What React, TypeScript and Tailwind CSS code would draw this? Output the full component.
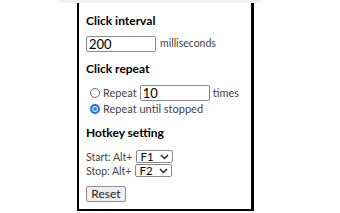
import React from 'react';

function Chevron() {
  return (
    <svg width="9" height="6" viewBox="0 0 9 6" className="ml-auto mr-[3px]">
      <path d="M1 1 L4.5 4.5 L8 1" fill="none" stroke="#222" strokeWidth="1.4" />
    </svg>
  );
}

function FakeSelect({ value }: { value: string }) {
  return (
    <div className="flex items-center w-[37px] h-[13px] border border-[#8a8a8a] rounded-[2px] bg-white pl-[3px] text-[11.5px] leading-[10px] text-black">
      {value}
      <Chevron />
    </div>
  );
}

function Radio({ checked }: { checked?: boolean }) {
  if (checked) {
    return (
      <span className="w-[10px] h-[10px] rounded-full bg-[#1a73e8] flex items-center justify-center shrink-0">
        <span className="w-[6px] h-[6px] rounded-full bg-[#2f86f6] border border-white" />
      </span>
    );
  }
  return <span className="w-[10px] h-[10px] rounded-full border border-[#6b6b6b] bg-white shrink-0" />;
}

export default function App() {
  return (
    <div
      className="w-[340px] h-[213px] bg-white overflow-hidden relative"
      style={{ fontFamily: 'Lato, "Open Sans", sans-serif' }}
    >
      <div className="h-[3px] w-[200px] ml-[60px] bg-[#f1f1f1]" />
      <div className="ml-[77px] w-[177px] h-[208px] border-l-[2px] border-r-[3px] border-b-[2px] border-black pl-[7px] pt-[10px] text-[#444]">
        <div className="text-[12px] font-bold leading-[16px] text-black">Click interval</div>
        <div className="flex items-center gap-[4px] mt-[7px]">
          <div className="w-[70px] h-[16px] border border-[#8a8a8a] rounded-[2px] pl-[2px] text-[13px] leading-[14px] text-black">
            200
          </div>
          <span className="text-[10.5px]">milliseconds</span>
        </div>
        <div className="text-[12px] font-bold leading-[16px] text-black mt-[9px]">Click repeat</div>
        <div className="pl-[4px] mt-[8px] text-[11px]">
          <div className="flex items-center h-[16px]">
            <Radio />
            <span className="ml-[3px]">Repeat</span>
            <div className="ml-[3px] w-[70px] h-[16px] border border-[#8a8a8a] rounded-[2px] pl-[2px] text-[13px] leading-[14px] text-black">
              10
            </div>
            <span className="ml-[3px]">times</span>
          </div>
          <div className="flex items-center h-[16px]">
            <Radio checked />
            <span className="ml-[3px]">Repeat until stopped</span>
          </div>
        </div>
        <div className="text-[12px] font-bold leading-[16px] text-black mt-[8px]">Hotkey setting</div>
        <div className="mt-[9px] flex flex-col gap-[1px] text-[10.5px] leading-[12px]">
          <div className="flex items-center h-[13px] gap-[4px]">
            <span>Start: Alt+</span>
            <FakeSelect value="F1" />
          </div>
          <div className="flex items-center h-[13px] gap-[4px]">
            <span>Stop: Alt+</span>
            <FakeSelect value="F2" />
          </div>
        </div>
        <button className="mt-[9px] w-[40px] h-[16px] border border-[#8f8f8f] rounded-[2px] bg-[#efefef] text-[12px] leading-none text-[#222]">
          Reset
        </button>
      </div>
    </div>
  );
}
